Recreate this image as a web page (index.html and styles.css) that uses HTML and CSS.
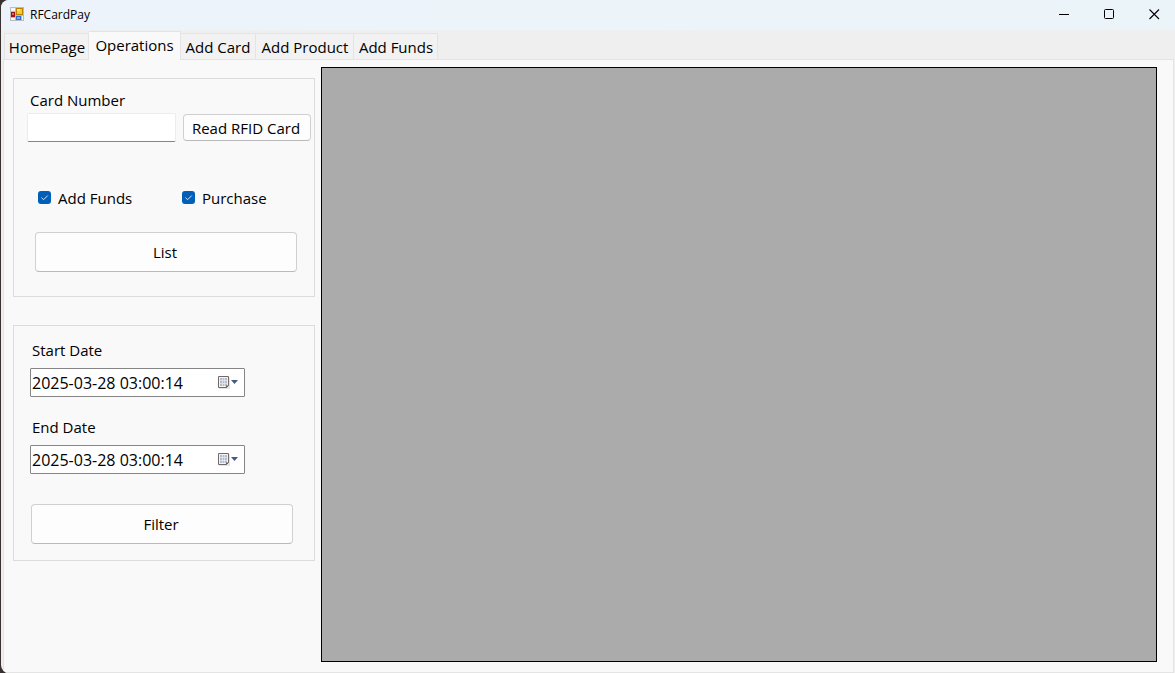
FILE: index.html
```html
<!DOCTYPE html>
<html lang="en">
<head>
<meta charset="utf-8">
<title>RFCardPay</title>
<link rel="stylesheet" href="styles.css">
</head>
<body>
<div class="window">
  <header class="titlebar">
    <svg class="app-icon" width="14" height="14" viewBox="0 0 14 14" shape-rendering="crispEdges" aria-hidden="true">
      <rect width="14" height="14" fill="#b9bdc2"/>
      <rect x="1" y="1" width="4" height="3" fill="#f3f5f7"/>
      <rect x="1" y="11" width="4" height="2" fill="#f3f5f7"/>
      <rect x="12" y="9" width="1" height="4" fill="#f3f5f7"/>
      <rect x="1" y="5" width="4" height="5" fill="#a3160f"/>
      <rect x="2" y="6" width="2" height="2" fill="#e0645a"/>
      <rect x="6" y="1" width="7" height="7" fill="#b98300"/>
      <rect x="7" y="2" width="5" height="5" fill="#fbc832"/>
      <rect x="7" y="2" width="3" height="2" fill="#ffe78f"/>
      <rect x="6" y="9" width="5" height="4" fill="#2f6cd0"/>
      <rect x="7" y="10" width="3" height="2" fill="#7fb0f4"/>
    </svg>
    <h1 class="title">RFCardPay</h1>
    <div class="window-controls">
      <button class="window-button" type="button" aria-label="Minimize"><svg width="11" height="11" viewBox="0 0 11 11"><path d="M0 5.5H10" stroke="#000"/></svg></button>
      <button class="window-button" type="button" aria-label="Maximize"><svg width="11" height="11" viewBox="0 0 11 11"><rect x=".5" y=".5" width="9" height="9" rx="1" fill="none" stroke="#000"/></svg></button>
      <button class="window-button" type="button" aria-label="Close"><svg width="11" height="11" viewBox="0 0 11 11"><path d="M.5 .5L10 10M10 .5L.5 10" stroke="#000" stroke-width="1.1"/></svg></button>
    </div>
  </header>
  <nav class="tabs" role="tablist">
    <button class="tab tab-home" type="button" role="tab">HomePage</button>
    <button class="tab tab-active" type="button" role="tab" aria-selected="true">Operations</button>
    <button class="tab tab-card" type="button" role="tab">Add Card</button>
    <button class="tab tab-product" type="button" role="tab">Add Product</button>
    <button class="tab tab-funds" type="button" role="tab">Add Funds</button>
  </nav>
  <main class="page">
    <aside class="sidebar">
      <form class="group group-card">
        <label class="field-label" for="card-number">Card Number</label>
        <div class="card-row">
          <input class="text-input" id="card-number" type="text">
          <button class="button button-read" type="button">Read RFID Card</button>
        </div>
        <div class="checks">
          <label class="check"><span class="check-mark"><input class="check-input" type="checkbox" checked><svg class="tick" width="13" height="13" viewBox="0 0 13 13"><path d="M3.5 6.7L5.6 8.7L9.7 4.6" fill="none" stroke="#d6e8f8"/></svg></span>Add Funds</label>
          <label class="check"><span class="check-mark"><input class="check-input" type="checkbox" checked><svg class="tick" width="13" height="13" viewBox="0 0 13 13"><path d="M3.5 6.7L5.6 8.7L9.7 4.6" fill="none" stroke="#d6e8f8"/></svg></span>Purchase</label>
        </div>
        <button class="button button-list" type="button">List</button>
      </form>
      <form class="group group-dates">
        <label class="field-label" for="start-date">Start Date</label>
        <div class="date-box">
          <input class="date-input" id="start-date" type="text" value="2025-03-28 03:00:14">
          <button class="date-button" type="button" aria-label="Choose start date"><svg width="21" height="14" viewBox="0 0 21 14"><path d="M1 1.5H12V13H1Z" fill="#000" opacity=".1"/><path d="M.5 .5H10.5V9.5L8.5 11.5H.5Z" fill="#f5f3f2" stroke="#756868"/><path d="M2 2H9V10H2Z" fill="#b4bdcb"/><path d="M2 4.5H9M2 7.5H9M4.5 2V10M6.5 2V10" stroke="#e8edf3" stroke-width=".7"/><path d="M8 12V9.5H11Z" fill="#6a5d5d"/><path d="M13 4H20L16.5 8Z" fill="#465a85"/></svg></button>
        </div>
        <label class="field-label label-end" for="end-date">End Date</label>
        <div class="date-box">
          <input class="date-input" id="end-date" type="text" value="2025-03-28 03:00:14">
          <button class="date-button" type="button" aria-label="Choose end date"><svg width="21" height="14" viewBox="0 0 21 14"><path d="M1 1.5H12V13H1Z" fill="#000" opacity=".1"/><path d="M.5 .5H10.5V9.5L8.5 11.5H.5Z" fill="#f5f3f2" stroke="#756868"/><path d="M2 2H9V10H2Z" fill="#b4bdcb"/><path d="M2 4.5H9M2 7.5H9M4.5 2V10M6.5 2V10" stroke="#e8edf3" stroke-width=".7"/><path d="M8 12V9.5H11Z" fill="#6a5d5d"/><path d="M13 4H20L16.5 8Z" fill="#465a85"/></svg></button>
        </div>
        <button class="button button-filter" type="button">Filter</button>
      </form>
    </aside>
    <section class="data-grid" aria-label="Operations list"></section>
  </main>
</div>
</body>
</html>
```
FILE: styles.css
```css
* { box-sizing: border-box; }

body {
  margin: 0;
  background: #37322f;
  color: #000;
  font: 15px/20px "Open Sans", "Noto Sans", sans-serif;
}

button, input { font: inherit; color: inherit; }

.window {
  display: flex;
  flex-direction: column;
  min-height: 100vh;
  margin-left: 1px;
  border-radius: 8px 0 0 8px;
  background: #efefef;
  overflow: hidden;
}

.titlebar {
  display: flex;
  align-items: center;
  height: 30px;
  padding-left: 9px;
  background: linear-gradient(90deg, #eef3fb, #ebf4f8);
}

.app-icon { margin-bottom: 2px; }

.title {
  flex: 1;
  margin: 0 0 0 6px;
  font-size: 12px;
  font-weight: 400;
}

.window-controls { display: flex; align-self: flex-start; }

.window-button {
  display: grid;
  place-items: center;
  width: 45px;
  height: 28px;
  padding: 0 0 0 4px;
  border: 0;
  background: none;
}

.tabs {
  display: flex;
  align-items: flex-end;
  height: 29px;
  padding-left: 3px;
}

.tab {
  height: 26px;
  padding: 0 0 0 1px;
  border: 1px solid #e4e4e4;
  border-width: 1px 1px 0 0;
  background: #f2f2f2;
  white-space: nowrap;
}

.tab-home { width: 85px; border-left-width: 1px; }
.tab-card { width: 75px; padding: 0; }
.tab-product { width: 98px; }
.tab-funds { width: 84px; }

.tab-active {
  z-index: 1;
  width: 92px;
  height: 29px;
  margin-bottom: -1px;
  padding: 0 0 3px;
  background: #f9f9f9;
}

.page {
  display: flex;
  flex: 1;
  gap: 6px;
  margin: 0 1px 0 2px;
  padding: 7px 16px 10px 9px;
  border: 1px solid #e4e4e4;
  background: #f9f9f9;
}

.sidebar {
  display: flex;
  flex: none;
  flex-direction: column;
  gap: 28px;
  width: 302px;
  padding-top: 11px;
}

.group {
  display: flex;
  flex-direction: column;
  border: 1px solid #dcdcdc;
}

.group-card { padding: 11px 3px 24px 13px; }
.group-dates { padding: 14px 16px 16px; }

.field-label { margin-left: 3px; }
.group-dates .field-label { margin: 0 0 8px 2px; }
.group-dates .label-end { margin-top: 20px; }

.card-row {
  display: flex;
  align-items: center;
  gap: 7px;
  margin-top: 3px;
}

.text-input {
  width: 149px;
  height: 29px;
  padding: 0 4px;
  border: 1px solid #ececec;
  border-bottom-color: #868686;
  border-radius: 2px;
  background: #fff;
}

.button {
  height: 40px;
  padding: 0 2px 0 0;
  border: 1px solid #d0d0d0;
  border-bottom-color: #bababa;
  border-radius: 4px;
  background: #fdfdfd;
}

.button-read { flex: 1; height: 27px; }
.button-list { width: 262px; margin: 24px 0 0 8px; }
.button-filter { width: 262px; margin: 30px 0 0 1px; }

.checks {
  display: grid;
  grid-template-columns: 144px 1fr;
  margin: 46px 0 0 11px;
}

.check {
  display: flex;
  align-items: center;
  gap: 7px;
}

.check-mark { display: grid; padding-bottom: 2px; }

.check-input {
  grid-area: 1 / 1;
  width: 13px;
  height: 13px;
  margin: 0;
  border-radius: 3px;
  background: #fff;
  appearance: none;
  box-shadow: inset 0 0 0 1px #868686;
}

.check-input:checked { background: #005fb8; box-shadow: none; }

.tick { grid-area: 1 / 1; pointer-events: none; visibility: hidden; }
.check-input:checked + .tick { visibility: visible; }

.date-box {
  display: flex;
  width: 215px;
  height: 29px;
  border: 1px solid #868686;
  border-radius: 1px;
  background: #fff;
}

.date-input {
  flex: 1;
  min-width: 0;
  padding: 0 1px;
  border: 0;
  background: none;
  font-size: 16px;
}

.date-button {
  display: grid;
  place-items: center;
  width: 31px;
  padding: 0;
  border: 0;
  background: none;
}

.data-grid {
  flex: 1;
  border: 1px solid #000;
  background: #ababab;
}
```
